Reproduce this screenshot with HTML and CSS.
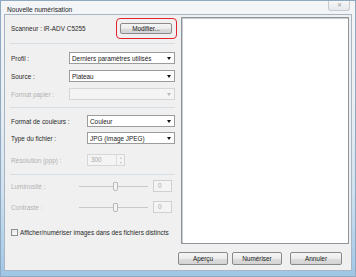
FILE: index.html
```html
<!DOCTYPE html>
<html lang="fr">

<head>
  <meta charset="UTF-8">
  <meta name="viewport" content="width=device-width, initial-scale=1.0">
  <title>Nouvelle numérisation</title>
  <link rel="stylesheet" href="styles.css">
</head>

<body>
  <div class="window">
    <div class="titlebar">
      <span class="title">Nouvelle numérisation</span>
      <span class="close">✕</span>
    </div>

    <div class="client">
      <div class="main">
        <div class="settings">
          <div class="scanner-row">
            <span class="label">Scanneur : iR-ADV C5255</span>
            <div class="highlight">
              <div class="btn btn-modify">Modifier...</div>
            </div>
          </div>

          <div class="separator sep-1"></div>

          <div class="field field-short row-profil">
            <span class="label">Profil :</span>
            <div class="select"><span>Derniers paramètres utilisés</span><i class="arrow"></i></div>
          </div>
          <div class="field field-short row-source">
            <span class="label">Source :</span>
            <div class="select"><span>Plateau</span><i class="arrow"></i></div>
          </div>
          <div class="field field-short row-papier disabled">
            <span class="label">Format papier :</span>
            <div class="select"><span></span><i class="arrow"></i></div>
          </div>

          <div class="separator sep-2"></div>

          <div class="field field-long row-couleur">
            <span class="label">Format de couleurs :</span>
            <div class="select"><span>Couleur</span><i class="arrow"></i></div>
          </div>
          <div class="field field-long row-type">
            <span class="label">Type du fichier :</span>
            <div class="select"><span>JPG (Image JPEG)</span><i class="arrow"></i></div>
          </div>
          <div class="field field-long row-resolution disabled">
            <span class="label">Résolution (ppp) :</span>
            <div class="spin">
              <span class="spin-value">300</span>
              <span class="spin-buttons"><i class="up"></i><i class="down"></i></span>
            </div>
          </div>

          <div class="separator sep-3"></div>

          <div class="field slider-row row-lum disabled">
            <span class="label">Luminosité :</span>
            <div class="slider">
              <div class="track track-left"></div>
              <div class="thumb"></div>
              <div class="track track-right"></div>
            </div>
            <div class="value-box">0</div>
          </div>
          <div class="field slider-row row-contrast disabled">
            <span class="label">Contraste :</span>
            <div class="slider">
              <div class="track track-left"></div>
              <div class="thumb"></div>
              <div class="track track-right"></div>
            </div>
            <div class="value-box">0</div>
          </div>

          <div class="check-row">
            <span class="checkbox"></span>
            <span class="label">Afficher/numériser images dans des fichiers distincts</span>
          </div>
        </div>

        <div class="preview"></div>
      </div>

      <div class="actions">
        <div class="btn btn-action">Aperçu</div>
        <div class="btn btn-action">Numériser</div>
        <div class="btn btn-action btn-cancel">Annuler</div>
      </div>
    </div>
  </div>
</body>

</html>
```

FILE: styles.css
```css
* {
  margin: 0;
  padding: 0;
  box-sizing: border-box;
}

body {
  font-family: "Liberation Sans", Arial, sans-serif;
  font-size: 6.4px;
  color: #2a2a2a;
  background: #ffffff;
}

/* cadre de la fenêtre */
.window {
  width: 356px;
  height: 277px;
  border: 1px solid #8fa9c0;
  padding: 0 3px 5px 3px;
  display: flex;
  flex-direction: column;
  background: linear-gradient(180deg, #f3f5f7 0%, #eceff2 35%, #d0e1ef 70%, #9fc6e6 100%);
}

.titlebar {
  height: 13px;
  display: flex;
  align-items: center;
  justify-content: space-between;
  padding-left: 3px;
}

.title {
  font-size: 6.6px;
  color: #1c1c1c;
  margin-top: 3px;
}

.close {
  width: 22px;
  height: 10px;
  margin-top: -3px;
  margin-right: 2px;
  border: 1px solid #c5cbd1;
  border-top: none;
  border-radius: 0 0 3px 3px;
  background: linear-gradient(180deg, #f6f7f8, #e6e9ec);
  color: #9a9a9a;
  font-size: 6px;
  line-height: 9px;
  text-align: center;
}

.client {
  flex: 1;
  border: 1px solid #a7b6c4;
  background: #f0f0f0;
  display: flex;
  flex-direction: column;
}

.main {
  height: 229px;
  display: flex;
}

.settings {
  width: 176px;
  flex-shrink: 0;
  padding: 3px 6px 0 6px;
  display: flex;
  flex-direction: column;
}

.preview {
  flex: 1;
  margin: 2px 2px 0 0;
  background: #ffffff;
  border: 1px solid #8e949a;
  box-shadow: inset 1px 1px 0 #c9ccd0;
}

/* ligne scanneur */
.scanner-row {
  height: 21px;
  display: flex;
  align-items: center;
  justify-content: space-between;
}

.highlight {
  width: 61px;
  height: 21px;
  margin-right: -2px;
  border: 1.5px solid #e2232d;
  border-radius: 4px;
  padding: 3.5px 3px;
}

.btn {
  height: 11px;
  border: 1px solid #8a8a8a;
  border-radius: 2px;
  background: linear-gradient(180deg, #f6f6f6 0%, #ebebeb 50%, #dddddd 51%, #d3d3d3 100%);
  text-align: center;
  line-height: 9px;
  color: #202020;
}

.btn-modify {
  width: 52px;
}

.separator {
  height: 1px;
  margin-left: -1px;
  background: #d6dde3;
}

.sep-1 {
  margin-top: 4px;
}

.sep-2 {
  margin-top: 7px;
}

.sep-3 {
  margin-top: 8px;
}

/* champs */
.field {
  display: flex;
  align-items: center;
  height: 12px;
}

.field .label {
  flex-shrink: 0;
}

.field-short .label {
  width: 58px;
}

.field-long .label {
  width: 76px;
}

.row-profil {
  margin-top: 8px;
}

.row-source,
.row-papier {
  margin-top: 6px;
}

.row-couleur {
  margin-top: 7px;
}

.row-type {
  margin-top: 5px;
}

.row-resolution {
  margin-top: 10px;
}

.select {
  flex: 1;
  height: 12px;
  border: 1px solid #9c9c9c;
  background: #ffffff;
  display: flex;
  align-items: center;
  justify-content: space-between;
  padding: 0 3px 0 2px;
  color: #1a1a1a;
}

.arrow {
  width: 0;
  height: 0;
  border-left: 2px solid transparent;
  border-right: 2px solid transparent;
  border-top: 3px solid #111111;
}

.disabled .label {
  color: #b2b2b2;
}

.disabled .select {
  background: #f4f4f4;
  border-color: #d6d6d6;
}

.disabled .arrow {
  border-top-color: #b8b8b8;
}

.spin {
  width: 38px;
  height: 12px;
  border: 1px solid #d6d6d6;
  background: #f4f4f4;
  display: flex;
  justify-content: space-between;
}

.spin-value {
  padding-left: 3px;
  line-height: 10px;
  color: #a8a8a8;
}

.spin-buttons {
  width: 8px;
  border-left: 1px solid #dedede;
  display: flex;
  flex-direction: column;
  align-items: center;
  justify-content: space-around;
}

.spin-buttons .up {
  border-left: 1.5px solid transparent;
  border-right: 1.5px solid transparent;
  border-bottom: 2px solid #c0c0c0;
}

.spin-buttons .down {
  border-left: 1.5px solid transparent;
  border-right: 1.5px solid transparent;
  border-top: 2px solid #c0c0c0;
}

/* curseurs */
.slider-row .label {
  width: 68px;
}

.row-lum {
  margin-top: 5px;
}

.row-contrast {
  margin-top: 9px;
}

.slider {
  width: 69px;
  flex-shrink: 0;
  height: 9px;
  display: flex;
  align-items: center;
}

.track {
  height: 1px;
  background: #c8c8c8;
}

.track-left {
  width: 34px;
}

.track-right {
  flex: 1;
}

.thumb {
  width: 5px;
  height: 9px;
  border: 1px solid #b8b8b8;
  border-radius: 1px 1px 2px 2px;
  background: #f4f4f4;
}

.value-box {
  width: 19px;
  height: 12px;
  margin-left: 5px;
  border: 1px solid #d0d0d0;
  background: #f4f4f4;
  padding-left: 4px;
  line-height: 10px;
  color: #a8a8a8;
}

.check-row {
  margin-top: 13px;
  height: 12px;
  display: flex;
  align-items: center;
  gap: 2px;
}

.checkbox {
  width: 7px;
  height: 7px;
  border: 1px solid #8f8f8f;
  background: linear-gradient(135deg, #e4e4e4, #ffffff);
}

/* boutons du bas */
.actions {
  flex: 1;
  display: flex;
  justify-content: flex-end;
  padding: 8px 9px 0 0;
  gap: 4px;
}

.btn-action {
  width: 50px;
  height: 13px;
  line-height: 11px;
}

.btn-cancel {
  width: 52px;
  margin-left: 4px;
}
```
